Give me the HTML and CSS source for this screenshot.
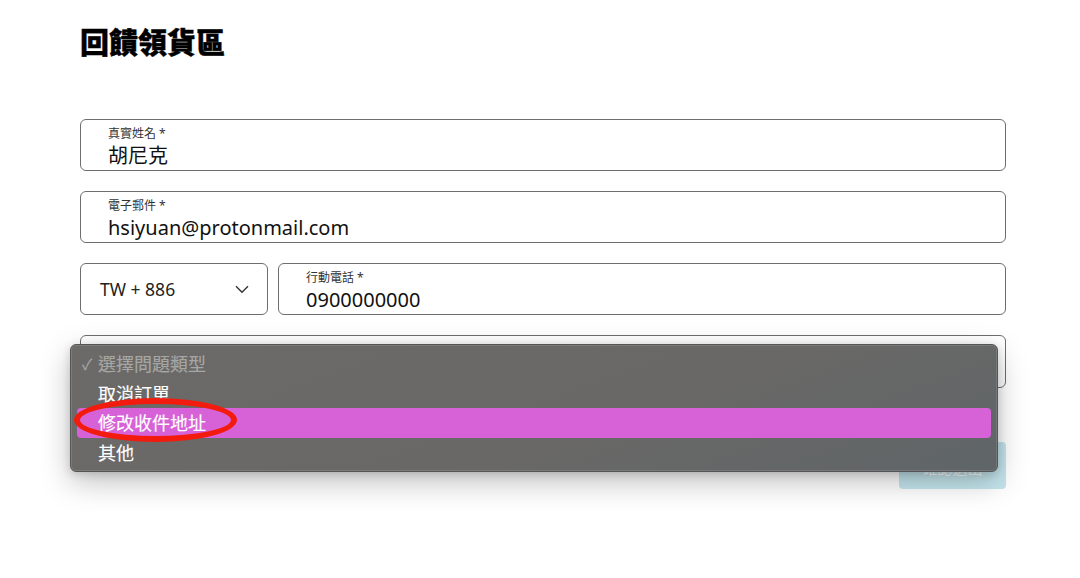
FILE: index.html
```html
<!DOCTYPE html>
<html lang="zh-Hant">
<head>
<meta charset="utf-8">
<title>回饋領貨區</title>
<link rel="stylesheet" href="styles.css">
</head>
<body>
<main class="page">
  <h1 class="title">回饋領貨區</h1>
  <form class="form">
    <div class="field">
      <span class="label">真實姓名 *</span>
      <span class="value">胡尼克</span>
    </div>
    <div class="field">
      <span class="label">電子郵件 *</span>
      <span class="value">hsiyuan@protonmail.com</span>
    </div>
    <div class="row">
      <div class="field select-field">
        <span class="select-value">TW + 886</span>
        <svg class="chevron" width="14" height="9" viewBox="0 0 14 9"><path d="M1 1.2 L7 7.2 L13 1.2" fill="none" stroke="#333" stroke-width="1.4"/></svg>
      </div>
      <div class="field grow">
        <span class="label">行動電話 *</span>
        <span class="value">0900000000</span>
      </div>
    </div>
    <div class="field problem">
      <div class="menu">
        <div class="item placeholder"><span class="check">✓</span>選擇問題類型</div>
        <div class="item">取消訂單</div>
        <div class="item active">修改收件地址</div>
        <div class="item">其他</div>
        <span class="ring"></span>
      </div>
    </div>
    <div class="actions">
      <button type="button" class="submit">確認送出</button>
    </div>
  </form>
</main>
</body>
</html>
```

FILE: styles.css
```css
* { box-sizing: border-box; }
html, body { margin: 0; background: #fff; }
body {
  font-family: "Noto Sans", "Noto Sans CJK TC", sans-serif;
  color: #111;
  width: 1080px;
  height: 578px;
  overflow: hidden;
}
.page {
  padding: 23px 74px 0 80px;
}
.title {
  margin: 0;
  font-size: 29px;
  line-height: 36px;
  font-weight: 900;
  -webkit-text-stroke: 0.4px #000;
  color: #000;
  font-family: "Noto Sans CJK TC", sans-serif;
}
.form {
  margin-top: 60px;
  display: flex;
  flex-direction: column;
  gap: 20px;
}
.field {
  height: 52px;
  border: 1px solid #6e6e6e;
  border-radius: 6px;
  padding: 7px 27px 0;
  display: flex;
  flex-direction: column;
  background: #fff;
}
.label {
  font-size: 12px;
  line-height: 14px;
  color: #333;
}
.value {
  font-size: 20px;
  line-height: 22px;
  color: #111;
  margin-top: 4px;
}
.row {
  display: flex;
  gap: 10px;
}
.select-field {
  width: 188px;
  flex: none;
  flex-direction: row;
  align-items: center;
  justify-content: space-between;
  padding: 0 18px 0 19px;
}
.select-value {
  font-size: 17.5px;
  color: #222;
}
.chevron { margin-top: 1px; }
.grow { flex: 1; }
.problem {
  position: relative;
  height: 53px;
}
.menu {
  position: absolute;
  left: -11px;
  top: 8px;
  width: 928px;
  height: 128px;
  padding: 4px 6px 6px 6px;
  border-radius: 6px;
  background: linear-gradient(160deg, #6b6a68 0%, #696867 60%, #5f6567 100%);
  border: 1px solid #555;
  box-shadow: 0 0 0 1px rgba(255,255,255,0.12) inset, 0 10px 30px rgba(0,0,0,0.25), 0 2px 8px rgba(0,0,0,0.15);
  z-index: 5;
  font-family: "Noto Sans CJK TC", sans-serif;
}
.item {
  height: 29.5px;
  line-height: 29px;
  font-size: 18px;
  font-weight: 400;
  -webkit-text-stroke: 0.15px #fff;
  color: #fff;
  padding-left: 21px;
  border-radius: 4px;
  position: relative;
}
.placeholder { color: #a6a6a4; -webkit-text-stroke: 0.15px #a6a6a4; }
.check {
  position: absolute;
  left: 5px;
  top: 0;
  font-size: 15px;
  color: #a6a6a4;
}
.active { background: #d762d7; }
.ring {
  position: absolute;
  left: 3px;
  top: 53px;
  width: 163px;
  height: 44px;
  border: 6px solid #f21b0e;
  border-radius: 50%;
}
.actions {
  display: flex;
  justify-content: flex-end;
  margin-top: 34px;
}
.submit {
  width: 107px;
  height: 47px;
  border: none;
  border-radius: 4px;
  background: #c5e6ee;
  color: #fff;
  font-size: 15px;
  font-family: "Noto Sans CJK TC", sans-serif;
  padding-top: 4px;
}
```
